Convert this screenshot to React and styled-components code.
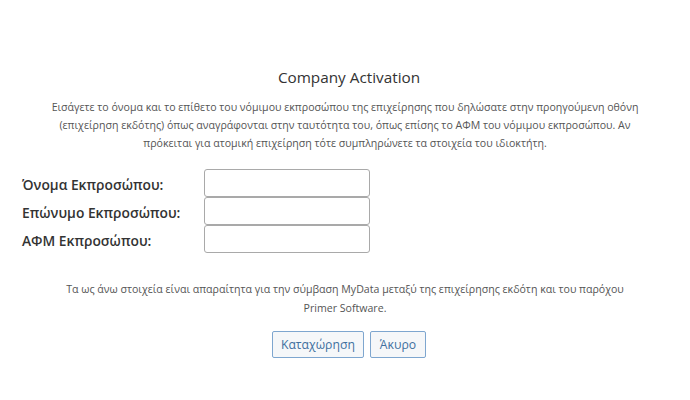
import React from 'react';
import styled, { createGlobalStyle } from 'styled-components';

const GlobalStyle = createGlobalStyle`
    body {
        margin: 0;
        background: #ffffff;
        font-family: "Open Sans", "Noto Sans", sans-serif;
    }
`;

const Page = styled.div`
    width: 690px;
    height: 400px;
    padding-top: 66px;
    box-sizing: border-box;
    display: flex;
    flex-direction: column;
    align-items: center;
`;

const Title = styled.h2`
    margin: 0 0 0 8px;
    font-size: 15.3px;
    font-weight: 400;
    color: #333333;
    line-height: 22px;
`;

const Intro = styled.p`
    margin: 10px 0 0;
    padding: 0 6px;
    text-align: center;
    font-size: 10.6px;
    line-height: 18px;
    color: #555555;
`;

const Form = styled.div`
    align-self: stretch;
    margin: 17px 0 0 22px;
    display: flex;
    flex-direction: column;
`;

const Row = styled.label`
    display: grid;
    grid-template-columns: 182px 166px;
    align-items: center;
`;

const Label = styled.span`
    font-size: 13.8px;
    font-weight: 600;
    color: #333333;
    padding-top: 2px;
`;

const Input = styled.input`
    height: 28px;
    box-sizing: border-box;
    border: 1px solid #a9a9a9;
    border-radius: 3px;
    padding: 2px 6px;
    font-family: inherit;
    font-size: 12px;
    outline: none;
`;

const Note = styled.p`
    margin: 27px 0 0;
    text-align: center;
    font-size: 10.6px;
    line-height: 19px;
    color: #555555;
`;

const Buttons = styled.div`
    margin: 13px 0 0 8px;
    display: flex;
    gap: 6px;
`;

const Button = styled.button`
    height: 27px;
    padding: 0 ${props => props.$wide ? '8px' : '9px'};
    border: 1px solid #7ea6cf;
    border-radius: 2px;
    background: #f5f7f9;
    color: #41709f;
    font-family: inherit;
    font-size: 12.2px;
    cursor: pointer;
`;

const fields = ['Όνομα Εκπροσώπου:', 'Επώνυμο Εκπροσώπου:', 'ΑΦΜ Εκπροσώπου:'];

export default function App() {
    return (
        <Page>
            <GlobalStyle />
            <Title>Company Activation</Title>
            <Intro>
                Εισάγετε το όνομα και το επίθετο του νόμιμου εκπροσώπου της επιχείρησης που δηλώσατε στην προηγούμενη οθόνη<br />
                (επιχείρηση εκδότης) όπως αναγράφονται στην ταυτότητα του, όπως επίσης το ΑΦΜ του νόμιμου εκπροσώπου. Αν<br />
                πρόκειται για ατομική επιχείρηση τότε συμπληρώνετε τα στοιχεία του ιδιοκτήτη.
            </Intro>
            <Form>
                {fields.map(f => (
                    <Row key={f}>
                        <Label>{f}</Label>
                        <Input type="text" />
                    </Row>
                ))}
            </Form>
            <Note>
                Τα ως άνω στοιχεία είναι απαραίτητα για την σύμβαση MyData μεταξύ της επιχείρησης εκδότη και του παρόχου<br />
                Primer Software.
            </Note>
            <Buttons>
                <Button $wide>Καταχώρηση</Button>
                <Button>Άκυρο</Button>
            </Buttons>
        </Page>
    );
}
